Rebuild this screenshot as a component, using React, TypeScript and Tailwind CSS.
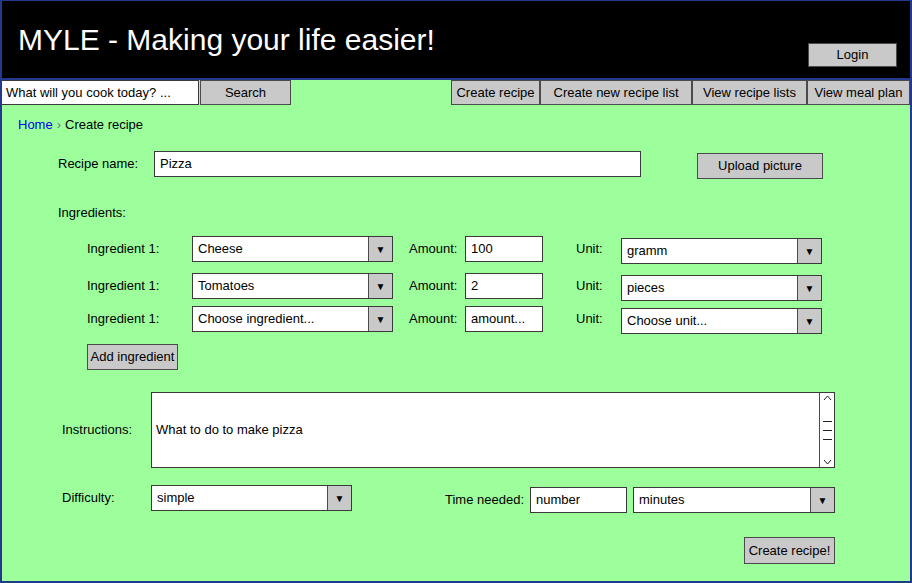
import type { ReactNode } from 'react'

function Btn({ children, className = '' }: { children: ReactNode; className?: string }) {
  return (
    <div
      className={`flex items-center justify-center bg-[#c9c9c9] border border-[#4b4b4b] text-[13px] text-black ${className}`}
    >
      {children}
    </div>
  )
}

function TextBox({ value, className = '' }: { value: string; className?: string }) {
  return (
    <div className={`flex items-center bg-white border border-[#3a3a3a] pl-[5px] text-[13px] text-black ${className}`}>
      {value}
    </div>
  )
}

function Select({ value, className = '' }: { value: string; className?: string }) {
  return (
    <div className={`flex bg-white border border-[#3a3a3a] text-[13px] text-black ${className}`}>
      <div className="flex-1 flex items-center pl-[5px]">{value}</div>
      <div className="w-[24px] flex items-center justify-center bg-[#c9c9c9] border-l border-[#4b4b4b] text-[10px]">
        ▼
      </div>
    </div>
  )
}

function Label({ children, className = '' }: { children: ReactNode; className?: string }) {
  return <div className={`text-[13px] text-black leading-[16px] ${className}`}>{children}</div>
}

const ingredients = [
  { name: 'Cheese', amount: '100', unit: 'gramm' },
  { name: 'Tomatoes', amount: '2', unit: 'pieces' },
  { name: 'Choose ingredient...', amount: 'amount...', unit: 'Choose unit...' },
]

export default function App() {
  return (
    <div className="w-[912px] h-[583px] flex flex-col bg-[#9cff9c] border-x-2 border-b-2 border-t border-[#23398f] font-['Liberation_Sans',Arial,sans-serif] overflow-hidden">
      {/* header */}
      <div className="h-[77px] shrink-0 bg-black flex justify-between">
        <div className="pl-[16px] pt-[24px] text-[30px] leading-[30px] text-white">
          MYLE - Making your life easier!
        </div>
        <Btn className="self-end mb-[11px] mr-[13px] w-[89px] h-[24px]">Login</Btn>
      </div>

      {/* nav */}
      <div className="h-[26px] shrink-0 flex border-t-2 border-[#23398f]">
        <TextBox value="What will you cook today? ..." className="-ml-[2px] w-[199px] h-[25px] pl-[3px]" />
        <Btn className="ml-[1px] w-[91px] h-[25px]">Search</Btn>
        <div className="flex ml-auto">
          <Btn className="w-[89px] h-[25px]">Create recipe</Btn>
          <Btn className="w-[152px] h-[25px]">Create new recipe list</Btn>
          <Btn className="w-[115px] h-[25px]">View recipe lists</Btn>
          <Btn className="w-[103px] h-[25px]">View meal plan</Btn>
        </div>
      </div>

      {/* content */}
      <div className="flex flex-col">
        <div className="mt-[13px] pl-[16px] text-[13px] leading-[16px] flex gap-[4px]">
          <span className="text-[#0000ee]">Home</span>
          <span className="text-[#777]">›</span>
          <span className="text-black">Create recipe</span>
        </div>

        <div className="mt-[18px] flex items-start">
          <div className="h-[26px] flex items-center pl-[56px] w-[152px]">
            <Label>Recipe name:</Label>
          </div>
          <TextBox value="Pizza" className="w-[487px] h-[26px]" />
          <Btn className="ml-[56px] mt-[2px] w-[126px] h-[26px]">Upload picture</Btn>
        </div>

        <Label className="mt-[26px] pl-[56px]">Ingredients:</Label>

        <div className="mt-[15px] flex flex-col">
          {ingredients.map((ing, i) => (
            <div key={i} className={`flex items-start ${i === 1 ? 'mt-[9px]' : i === 2 ? 'mt-[5px]' : ''}`}>
              <div className="h-[26px] flex items-center pl-[85px] w-[190px]">
                <Label>Ingredient 1:</Label>
              </div>
              <Select value={ing.name} className="w-[201px] h-[26px]" />
              <div className="h-[26px] flex items-center pl-[16px] w-[72px]">
                <Label>Amount:</Label>
              </div>
              <TextBox value={ing.amount} className="w-[78px] h-[26px]" />
              <div className="h-[26px] flex items-center pl-[33px] w-[78px]">
                <Label>Unit:</Label>
              </div>
              <Select value={ing.unit} className="mt-[2px] w-[201px] h-[26px]" />
            </div>
          ))}
        </div>

        <Btn className="mt-[10px] ml-[85px] w-[91px] h-[26px]">Add ingredient</Btn>

        <div className="mt-[22px] flex items-center">
          <div className="pl-[60px] w-[149px]">
            <Label>Instructions:</Label>
          </div>
          <div className="w-[684px] h-[76px] flex bg-white border border-[#3a3a3a]">
            <div className="flex-1 flex items-center pl-[4px] text-[13px] text-black">What to do to make pizza</div>
            <div className="w-[15px] border-l border-[#4b4b4b] flex flex-col items-center justify-between py-[2px]">
              <svg width="9" height="6" viewBox="0 0 9 6">
                <path d="M1 5 L4.5 1 L8 5" fill="none" stroke="#222" strokeWidth="1" />
              </svg>
              <div className="flex flex-col gap-[8px]">
                <div className="w-[9px] h-px bg-[#222]" />
                <div className="w-[9px] h-px bg-[#222]" />
                <div className="w-[9px] h-px bg-[#222]" />
              </div>
              <svg width="9" height="6" viewBox="0 0 9 6">
                <path d="M1 1 L4.5 5 L8 1" fill="none" stroke="#222" strokeWidth="1" />
              </svg>
            </div>
          </div>
        </div>

        <div className="mt-[17px] flex items-start">
          <div className="h-[26px] flex items-center pl-[60px] w-[149px]">
            <Label>Difficulty:</Label>
          </div>
          <Select value="simple" className="w-[201px] h-[26px]" />
          <div className="mt-[2px] h-[26px] flex items-center pl-[93px] w-[178px]">
            <Label>Time needed:</Label>
          </div>
          <TextBox value="number" className="mt-[2px] w-[97px] h-[26px]" />
          <Select value="minutes" className="mt-[2px] ml-[6px] w-[202px] h-[26px]" />
        </div>

        <Btn className="mt-[24px] ml-[742px] w-[91px] h-[27px]">Create recipe!</Btn>
      </div>
    </div>
  )
}
